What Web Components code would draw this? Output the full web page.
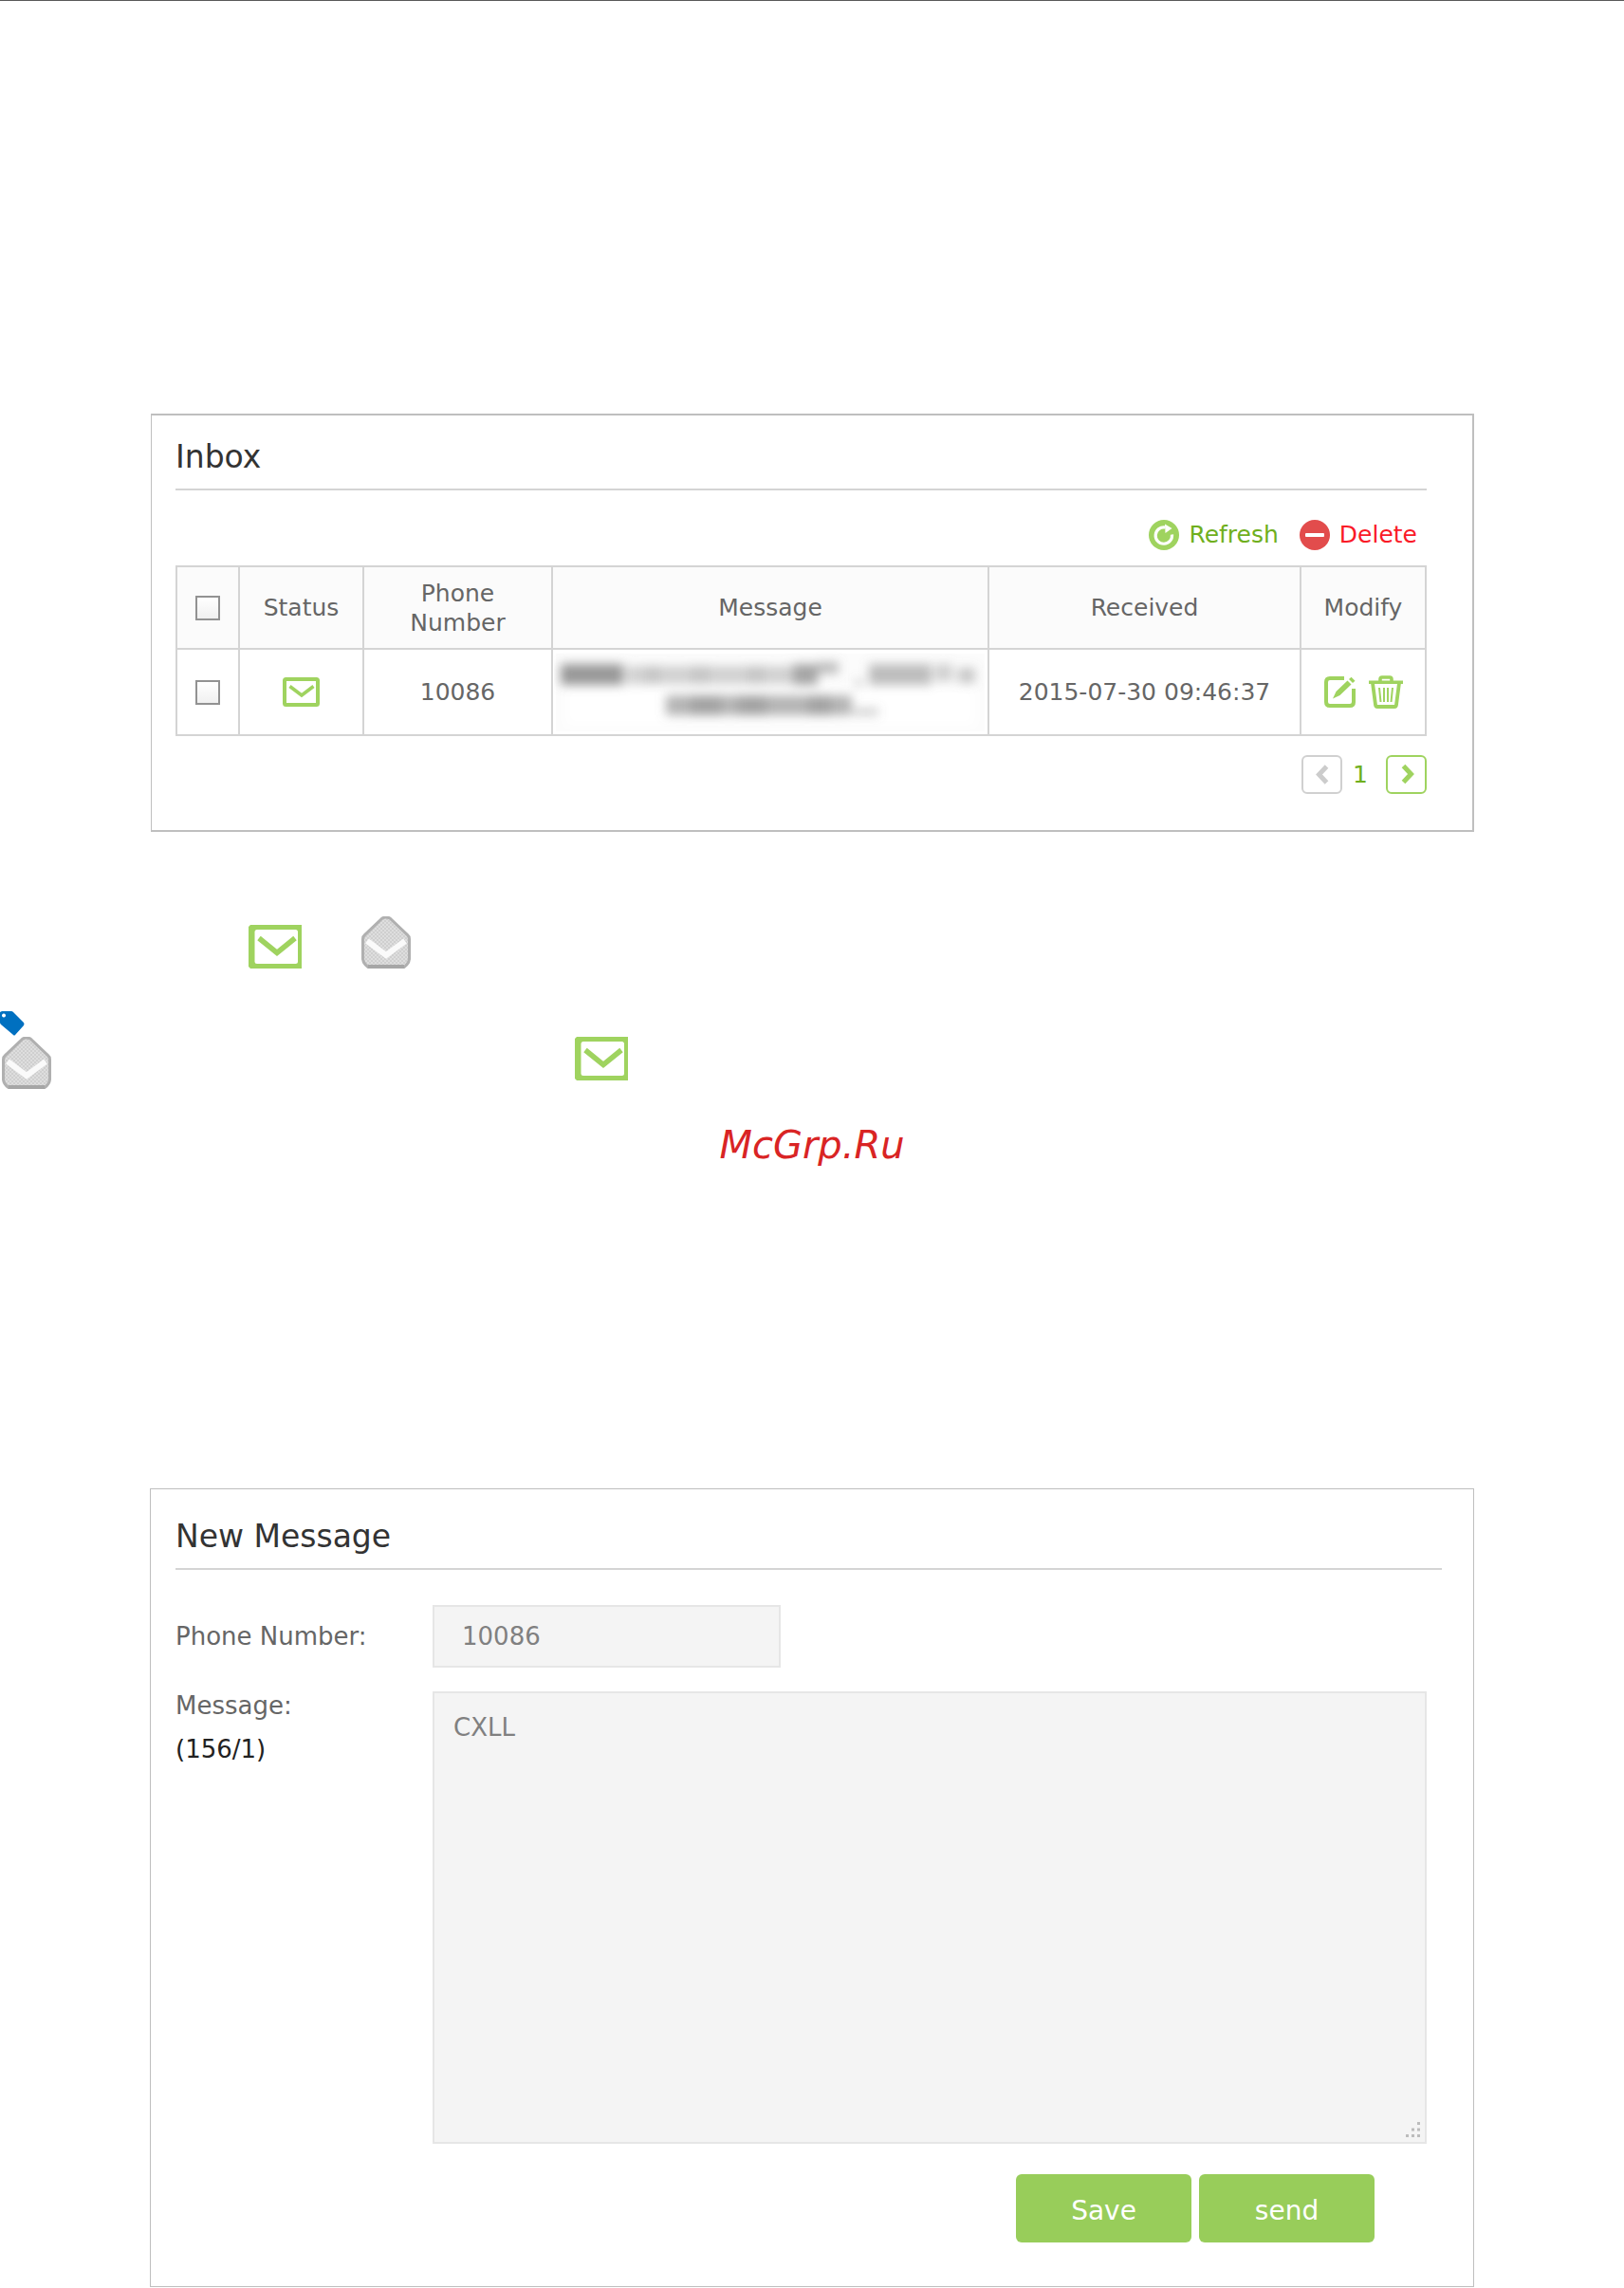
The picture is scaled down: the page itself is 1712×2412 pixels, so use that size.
<!DOCTYPE html>
<html lang="en">
<head>
<meta charset="utf-8">
<title>SMS messages</title>
<style>
html,body{margin:0;background:#fff}
body{font-family:Verdana,"DejaVu Sans",sans-serif;font-size:25px;color:#666}
</style>
</head>
<body>
<sms-page></sms-page>
<script>
const ICONS = {
  mail: ['0 0 39 31', '<rect x="2" y="2" width="35" height="27" rx="1.5" fill="none" stroke="#9fd35f" stroke-width="4"/><path d="M7.500 9.500 20 19l12.500-9.500" fill="none" stroke="#9fd35f" stroke-width="3.600"/>'],
  unread: ['0 0 56 46', '<path d="M2 0H56V46H2L0 44V2Z" fill="#9fd35f"/><rect x="6.500" y="5" width="45.500" height="36" rx="2.500" fill="#fff"/><path d="M11 14 30 29.500 49 14" fill="none" stroke="#9fd35f" stroke-width="5.500"/>'],
  read: ['0 0 52 55', '<defs><pattern id="d" width="4" height="4" patternUnits="userSpaceOnUse"><rect width="4" height="4" fill="#dedede"/><path d="M0 0h2v2H0zM2 2h2v2H2z" fill="#cfcfcf"/></pattern></defs><path d="M22 2Q26 0 30 2L48 19Q50.500 21 50.500 24V45Q50 50 45 53.500H7Q2 50 1.500 45V24Q1.500 21 4 19Z" fill="url(#d)" stroke="#b0b0b0" stroke-width="3"/><path d="M7 53H45" stroke="#a6a6a6" stroke-width="4"/><path d="M6 26 26 41 46 26" fill="none" stroke="#fafafa" stroke-width="6"/>'],
  refresh: ['0 0 32 32', '<circle cx="16" cy="16" r="16" fill="#9fd35f"/><path d="M17.500 8A8.700 8.700 0 1 0 24.500 15.500" fill="none" stroke="#fff" stroke-width="3.200"/><path d="M17 4.500 24.500 9 17.500 14Z" fill="#fff"/>'],
  remove: ['0 0 32 32', '<circle cx="16" cy="16" r="16" fill="#e24c4c"/><rect x="6" y="14" width="20" height="4" rx="1" fill="#fff"/>'],
  edit: ['0 0 33 33', '<path d="M21 2H6Q2 2 2 6V27Q2 31 6 31H27Q31 31 31 27V13" fill="none" stroke="#9fd35f" stroke-width="4"/><path d="M9 23.500 12.500 16 24.500 4.500 28.500 8.500 16.500 20ZM26 3 28.500.8 32.500 4.800 30 7Z" fill="#9fd35f"/>'],
  trash: ['0 0 36 35', '<path d="M12 6V4Q12 2 14 2H22Q24 2 24 4V6" fill="none" stroke="#9fd35f" stroke-width="3.600"/><path d="M0 5.500H36V9H0Z" fill="#9fd35f"/><path d="M4 8 7 31Q7.200 33 9 33H27Q28.800 33 29 31L32 8" fill="none" stroke="#9fd35f" stroke-width="3.800"/><path d="M11 13 12.500 28M16 13V28M20 13V28M25 13 23.500 28" stroke="#9fd35f" stroke-width="2"/>'],
  prev: ['0 0 43 41', '<rect x="1" y="1" width="41" height="39" rx="5" fill="none" stroke="#d0d0d0" stroke-width="2"/><path d="M26.500 12 18.500 20.500 26.500 29" fill="none" stroke="#ccc" stroke-width="5"/>'],
  next: ['0 0 43 41', '<rect x="1" y="1" width="41" height="39" rx="5" fill="none" stroke="#9fd35f" stroke-width="2"/><path d="M18.500 11.500 26.500 20 18.500 28.500" fill="none" stroke="#9fd35f" stroke-width="5"/>'],
  tag: ['0 0 26 26', '<path fill-rule="evenodd" d="M0 1 2 0H12Q13 0 14 1L25 12Q26 13.500 25 15L16 25Q15 26 14 25L1 14Q0 13 0 12ZM4 2.500a2 2 0 1 0 .01 0Z" fill="#0070c0"/>'],
  redacted: ['0 0 456 86', '<defs><filter id="b" x="-10%" y="-30%" width="120%" height="160%"><feGaussianBlur stdDeviation="5.500"/></filter></defs><rect x="2" y="2" width="452" height="82" fill="#fcfcfc"/><rect x="12" y="38" width="432" height="40" fill="#fff" filter="url(#b)"/><g filter="url(#b)" fill="#777"><rect x="7" y="13" width="66" height="22" opacity=".75"/><rect x="76" y="15" width="176" height="19" opacity=".32"/><rect x="96" y="15" width="16" height="18" opacity=".15"/><rect x="144" y="15" width="20" height="18" opacity=".15"/><rect x="204" y="15" width="18" height="18" opacity=".15"/><rect x="252" y="13" width="26" height="22" opacity=".65"/><rect x="278" y="11" width="22" height="12" opacity=".5"/><rect x="318" y="29" width="6" height="8" opacity=".4"/><rect x="332" y="13" width="66" height="22" opacity=".48"/><rect x="402" y="13" width="18" height="18" opacity=".35"/><rect x="426" y="17" width="18" height="16" opacity=".4"/><rect x="118" y="46" width="196" height="21" opacity=".55"/><rect x="144" y="46" width="32" height="21" opacity=".3"/><rect x="194" y="46" width="30" height="21" opacity=".3"/><rect x="268" y="46" width="24" height="21" opacity=".3"/><rect x="316" y="60" width="26" height="7" opacity=".4"/></g>'],
  grip: ['0 0 17 17', '<path d="M13 0h3v3h-3zM7 6.500h3v3H7zM13 6.500h3v3h-3zM1 13h3v3H1zM7 13h3v3H7zM13 13h3v3h-3z" fill="#bcbcbc"/>']
};

const define = (name, html) => customElements.define(name, class extends HTMLElement {
  constructor() {
    super();
    const t = document.createElement('template');
    t.innerHTML = html;
    this.attachShadow({mode: 'open'}).append(t.content.cloneNode(true));
  }
});

customElements.define('sms-icon', class extends HTMLElement {
  connectedCallback() {
    if (this.shadowRoot) return;
    const [box, art] = ICONS[this.getAttribute('name')];
    const [, , w, h] = box.split(' ');
    this.attachShadow({mode: 'open'}).innerHTML =
      `<style>:host{display:block;flex:none;width:fit-content}svg{display:block}</style>
       <svg width="${w}" height="${h}" viewBox="${box}" aria-hidden="true">${art}</svg>`;
  }
});

define('sms-panel', `
<style>
:host{display:block;box-sizing:border-box;border:1px solid #bfbfbf;padding:30px 33px 0 26px}
h2{margin:0;padding-bottom:13px;border-bottom:2px solid #d4d4d4;font-weight:400;font-size:33px;line-height:40px;color:#333}
</style>
<h2><slot name="title"></slot></h2>
<slot></slot>`);

define('sms-inbox', `
<style>
:host{display:block}
button{border:0;background:none;padding:0;font:inherit;color:inherit;display:flex;align-items:center;gap:10px}
.tools{display:flex;justify-content:flex-end;gap:22px;padding:31px 10px 16px 0;line-height:32px}
.refresh{color:#6faf1e}.delete{color:#fa1a28}
table{width:100%;border-collapse:collapse;table-layout:fixed;line-height:31px;text-align:center}
th,td{border:2px solid #d4d4d4;padding:0;font-weight:400;vertical-align:middle}
th{background:#fbfbfb;height:85px}
td{height:89px}
.check{width:66px}.status{width:131px}.phone{width:199px}.date{width:329px}.modify{width:132px}
input{appearance:none;display:block;width:26px;height:26px;margin:0 auto;border:2px solid #929292;background:linear-gradient(#fff,#f0f0f0)}
td > sms-icon{margin:0 auto}
.acts{display:flex;justify-content:center;gap:14px}
.pager{display:flex;justify-content:flex-end;align-items:center;padding:20px 0 38px;color:#6faf1e}
.pager span{padding:0 19px 0 11px}
.break{display:block}
</style>
<div class="tools">
  <button class="refresh"><sms-icon name="refresh"></sms-icon>Refresh</button>
  <button class="delete"><sms-icon name="remove"></sms-icon>Delete</button>
</div>
<table>
  <colgroup><col class="check"><col class="status"><col class="phone"><col><col class="date"><col class="modify"></colgroup>
  <thead><tr>
    <th><input type="checkbox" aria-label="Select all"></th><th>Status</th><th>Phone <span class="break">Number</span></th><th>Message</th><th>Received</th><th>Modify</th>
  </tr></thead>
  <tbody><tr>
    <td><input type="checkbox" aria-label="Select message"></td>
    <td><sms-icon name="mail"></sms-icon></td>
    <td>10086</td>
    <td><sms-icon name="redacted"></sms-icon></td>
    <td>2015-07-30 09:46:37</td>
    <td><div class="acts"><button aria-label="Edit"><sms-icon name="edit"></sms-icon></button><button aria-label="Delete message"><sms-icon name="trash"></sms-icon></button></div></td>
  </tr></tbody>
</table>
<div class="pager">
  <button aria-label="Previous page"><sms-icon name="prev"></sms-icon></button><span>1</span><button aria-label="Next page"><sms-icon name="next"></sms-icon></button>
</div>`);

define('sms-compose', `
<style>
:host{display:block;font-size:26px}
form{padding:37px 16px 46px 0}
.row{display:grid;grid-template-columns:271px 1fr}
.row label{line-height:66px}
.message{padding-top:17px}
.message label,.count{display:block;line-height:46px}
.count{color:#222}
input,textarea{box-sizing:border-box;display:block;border:2px solid #e6e6e6;border-radius:0;background:#f4f4f4;color:#808080;font:inherit;outline:0}
input{width:367px;height:66px;padding:0 29px}
.box{position:relative;margin-top:8px}
textarea{width:100%;height:477px;padding:20px;line-height:32px;resize:none}
.box sms-icon{position:absolute;right:6px;bottom:6px}
.buttons{display:flex;justify-content:flex-end;gap:8px;padding:32px 55px 0 0}
button{width:185px;height:72px;border:0;border-radius:6px;background:#98cd5a;color:#fff;font:28px Verdana,"DejaVu Sans",sans-serif;padding:4px 0 0}
</style>
<form>
  <div class="row"><label for="phone">Phone Number:</label><input id="phone" type="text" value="10086"></div>
  <div class="row message">
    <div><label for="text">Message:</label><span class="count">(156/1)</span></div>
    <div class="box"><textarea id="text">CXLL</textarea><sms-icon name="grip"></sms-icon></div>
  </div>
  <div class="buttons"><button type="button">Save</button><button type="button">send</button></div>
</form>`);

define('sms-page', `
<style>
:host{display:block;border-top:1px solid #595959}
sms-panel{margin:0 158px}
.inbox{margin-top:435px;padding:24px 48px 0 25px;border-width:2px 2px 2px 1px;margin-left:159px}
.legend{display:flex;align-items:flex-end;gap:63px;padding:89px 0 0 262px}
.note{padding-top:45px}
.note div{display:flex;gap:552px;padding:1px 0 0 2px}
.mark{padding-top:36px;font-style:italic;font-size:40px;line-height:46px;text-align:center;color:#d92424}
.compose{margin-top:339px}
</style>
<sms-panel class="inbox"><span slot="title">Inbox</span><sms-inbox></sms-inbox></sms-panel>
<div class="legend"><sms-icon name="unread"></sms-icon><sms-icon name="read"></sms-icon></div>
<div class="note"><sms-icon name="tag"></sms-icon><div><sms-icon name="read"></sms-icon><sms-icon name="unread"></sms-icon></div></div>
<div class="mark">McGrp.Ru</div>
<sms-panel class="compose"><span slot="title">New Message</span><sms-compose></sms-compose></sms-panel>`);
</script>
</body>
</html>
